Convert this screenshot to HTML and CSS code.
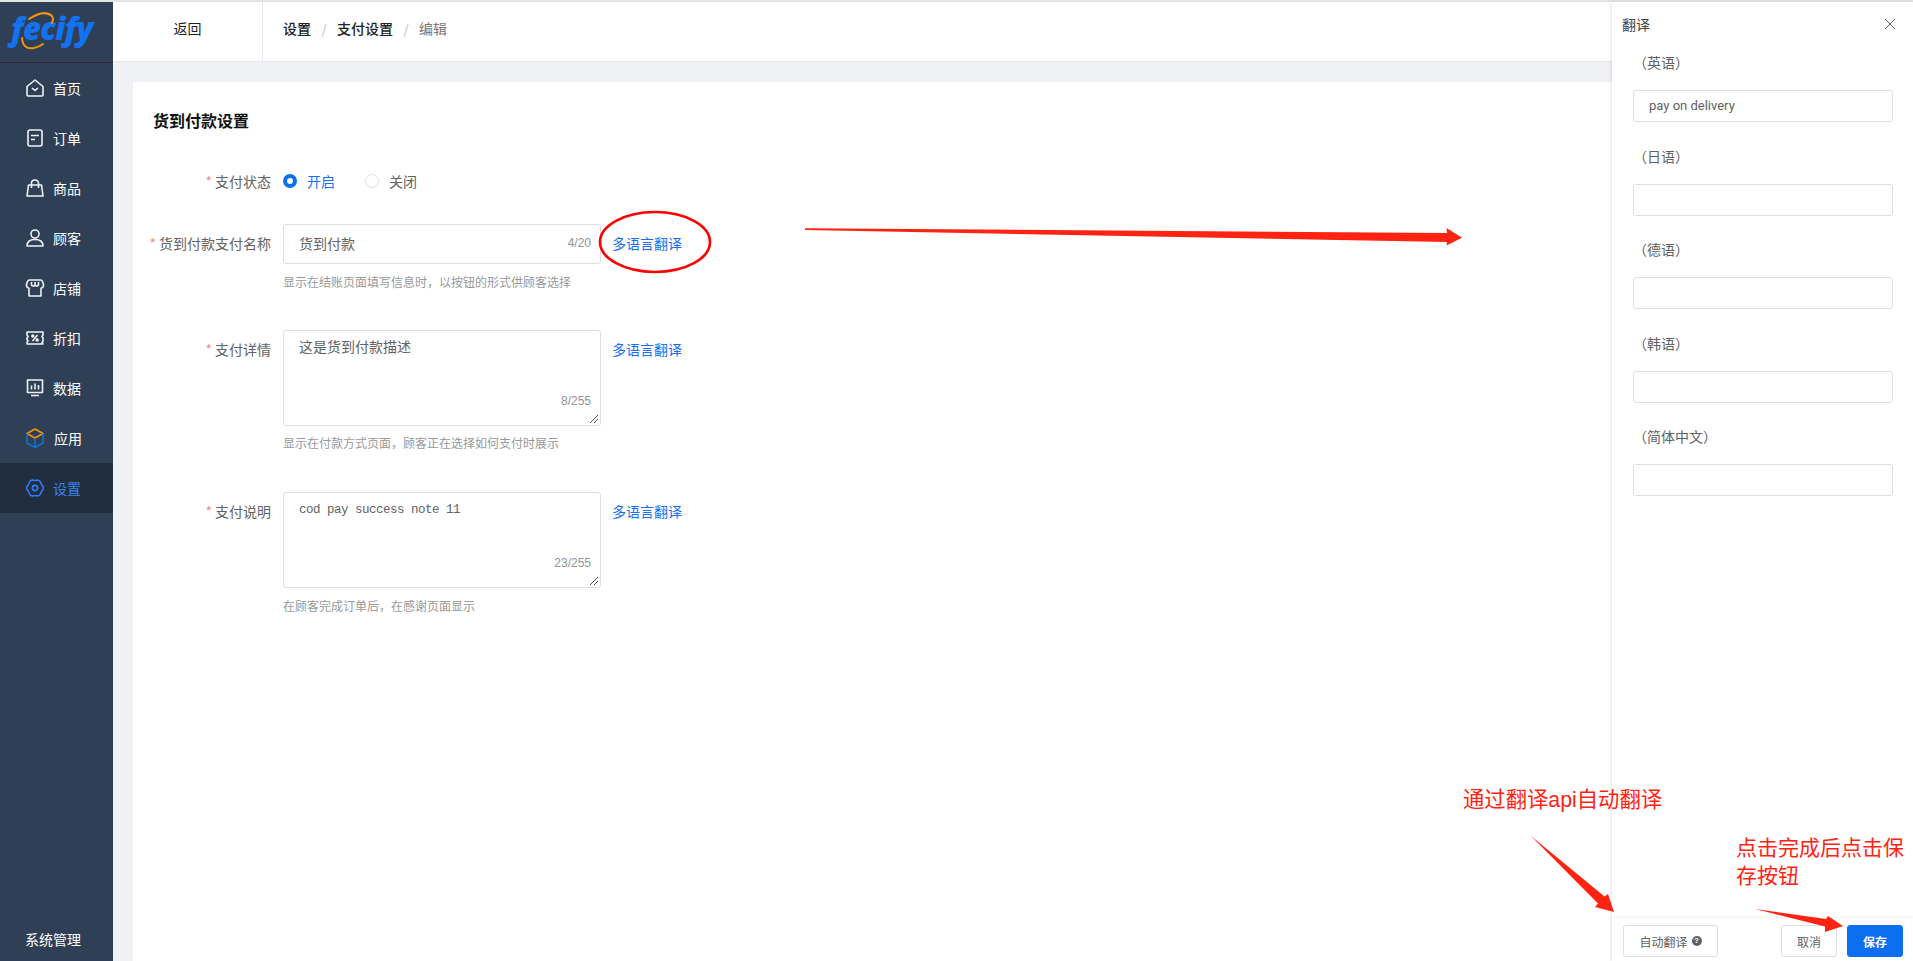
FILE: index.html
```html
<!DOCTYPE html>
<html lang="zh-CN">
<head>
<meta charset="utf-8">
<title>货到付款设置</title>
<link rel="stylesheet" href="styles.css">
</head>
<body>
<div class="app">
  <aside class="sidebar">
    <div class="logo">
      <span class="logo-text">fecify</span>
      <svg class="logo-arcs" width="113" height="60" viewBox="0 0 113 60" fill="none" stroke="#f0930f" stroke-width="2" stroke-linecap="round"><path d="M29 19Q44 9 52 16 54 19 52 23"/><path d="M22 38Q23 50 34 48 39 47 43 44"/></svg>
    </div>
    <nav class="menu">
      <a class="menu-item"><svg class="mi" viewBox="0 0 18 18"><path d="M1 7.500 9 1l8 6.500V16a1 1 0 0 1-1 1H2a1 1 0 0 1-1-1z"/><path d="M6 9l3 2.500L12 9"/></svg><span>首页</span></a>
      <a class="menu-item"><svg class="mi" viewBox="0 0 18 18"><rect x="2" y="1" width="14" height="16" rx="2"/><path d="M5 6.500h8M5 10.500h4"/></svg><span>订单</span></a>
      <a class="menu-item"><svg class="mi" viewBox="0 0 18 18"><path d="M1 17 2.500 6h13L17 17z"/><path d="M5.500 9V4a3.500 3 0 0 1 7 0v5"/></svg><span>商品</span></a>
      <a class="menu-item"><svg class="mi" viewBox="0 0 18 18"><circle cx="9" cy="5" r="4"/><path d="M1 17c0-4 3-6.500 8-6.500s8 2.500 8 6.500z"/></svg><span>顾客</span></a>
      <a class="menu-item"><svg class="mi" viewBox="0 0 18 18"><path d="M3.500 1h11q1.500 0 2 1.500l1 3q.5 3-2.500 3.800V17H3V9.300Q0 8.500.5 5.500l1-3Q2 1 3.500 1z"/><path d="M5.500 3v2.500a1.750 1.500 0 0 0 3.500 0V3M9 5.500a1.750 1.500 0 0 0 3.500 0V3"/></svg><span>店铺</span></a>
      <a class="menu-item"><svg class="mi" viewBox="0 0 18 18"><path d="M1 3h16v3l-1 1.500 1 1.500v3l-1 1.500 1 1.500H1v-1.500l1-1.500-1-1.500V9l1-1.500L1 6z"/><path d="M6.500 12l5-6"/><circle cx="6.800" cy="7" r=".9"/><circle cx="11.200" cy="11" r=".9"/></svg><span>折扣</span></a>
      <a class="menu-item"><svg class="mi" viewBox="0 0 18 18"><rect x="1.500" y="1" width="15" height="12.500"/><path d="M5.500 6.500v4M9 4.500v6M12.500 6v4.500M5 16.500h8"/></svg><span>数据</span></a>
      <a class="menu-item"><svg class="mi cube" viewBox="0 0 18 20"><path class="cube-top" d="M9 1l8 4.500-8 4.500-8-4.500z"/><path class="cube-side" d="M1 5.500v9.500l8 4.500 8-4.500V5.500M9 10.500v9"/></svg><span class="shift">应用</span></a>
      <a class="menu-item active"><svg class="mi" viewBox="0 0 18 18"><path d="M9 1.600Q14.300 -.2 15.300 5.300 19.600 9 15.300 12.700 14.300 18.200 9 16.400 3.700 18.200 2.700 12.700-1.600 9 2.700 5.300 3.700 -.2 9 1.600z"/><circle cx="9" cy="9" r="2.600"/></svg><span>设置</span></a>
    </nav>
    <div class="sys">系统管理</div>
  </aside>

  <div class="main">
    <header class="topbar">
      <div class="back">返回</div>
      <div class="crumbs">
        <span class="crumb">设置</span><span class="sep">/</span>
        <span class="crumb">支付设置</span><span class="sep">/</span>
        <span class="crumb last">编辑</span>
      </div>
    </header>
    <div class="content">
      <section class="card">
        <h1 class="title">货到付款设置</h1>
        <div class="row row-radio">
          <div class="label short"><i>*</i>支付状态</div>
          <div class="radios">
            <span class="radio"><b class="dot on"></b><span class="radio-on">开启</span></span>
            <span class="radio"><b class="dot"></b><span>关闭</span></span>
          </div>
        </div>
        <div class="row row-name">
          <div class="label"><i>*</i>货到付款支付名称</div>
          <div class="control">
            <div class="input">货到付款<span class="count">4/20</span></div>
            <p class="hint">显示在结账页面填写信息时，以按钮的形式供顾客选择</p>
          </div>
          <a class="link">多语言翻译</a>
        </div>
        <div class="row row-detail">
          <div class="label"><i>*</i>支付详情</div>
          <div class="control">
            <div class="area">这是货到付款描述<span class="count">8/255</span>
              <svg class="grip" width="10" height="10" viewBox="0 0 10 10"><path d="M1 9 9 1M5 9 9 5" stroke="#555" fill="none"/></svg></div>
            <p class="hint">显示在付款方式页面，顾客正在选择如何支付时展示</p>
          </div>
          <a class="link">多语言翻译</a>
        </div>
        <div class="row row-note">
          <div class="label"><i>*</i>支付说明</div>
          <div class="control">
            <div class="area mono">cod pay success note 11<span class="count">23/255</span>
              <svg class="grip" width="10" height="10" viewBox="0 0 10 10"><path d="M1 9 9 1M5 9 9 5" stroke="#555" fill="none"/></svg></div>
            <p class="hint">在顾客完成订单后，在感谢页面显示</p>
          </div>
          <a class="link">多语言翻译</a>
        </div>
      </section>
    </div>
  </div>

  <aside class="drawer">
    <div class="drawer-head"><span>翻译</span>
      <svg class="close" width="12" height="12" viewBox="0 0 12 12"><path d="M1 1l10 10M11 1 1 11" stroke="#666" fill="none"/></svg></div>
    <div class="drawer-body">
      <label class="d-label">（英语）</label><div class="d-input">pay on delivery</div>
      <label class="d-label">（日语）</label><div class="d-input"></div>
      <label class="d-label">（德语）</label><div class="d-input"></div>
      <label class="d-label">（韩语）</label><div class="d-input"></div>
      <label class="d-label">（简体中文）</label><div class="d-input"></div>
    </div>
    <div class="drawer-foot">
      <button class="btn btn-auto">自动翻译<span class="q">?</span></button>
      <span class="spacer"></span>
      <button class="btn btn-cancel">取消</button>
      <button class="btn btn-save">保存</button>
    </div>
  </aside>
</div>

<svg class="marks" width="1913" height="961" viewBox="0 0 1913 961">
  <ellipse cx="655" cy="242" rx="55" ry="30" fill="none" stroke="#f00" stroke-width="2.600"/>
  <g fill="#ff2312">
    <path d="M805 228.300 1447 233 1446.500 228 1462 237.700 1446.500 245.500 1447 242 805 230z"/>
    <path d="M1531 836 1604.500 896.500 1608 894 1614 912 1595 907 1598 903.500z"/>
    <path d="M1755 909 1826 919 1828 916 1843 926 1825 932 1825 926.500z"/>
  </g>
</svg>
<div class="note note-a">通过翻译api自动翻译</div>
<div class="note note-b">点击完成后点击保存按钮</div>
</body>
</html>
```
FILE: styles.css
```css
* { box-sizing: border-box; }
html, body { margin: 0; height: 100%; overflow: hidden; }
body {
  font-family: "Noto Sans CJK SC", "Liberation Sans", sans-serif;
  font-size: 14px;
  color: #606266;
  background: #fff;
}
.app {
  position: relative;
  display: flex;
  height: 961px;
  border-top: 2px solid #e2e2e2;
}

/* sidebar */
.sidebar {
  width: 113px;
  flex: none;
  display: flex;
  flex-direction: column;
  background: #2f4056;
  color: #fff;
}
.logo {
  position: relative;
  height: 61px;
  flex: none;
  border-bottom: 1px solid #2b2b2b;
  padding-left: 11px;
}
.logo-text {
  font-family: "Open Sans", "Liberation Sans", sans-serif;
  font-weight: 800;
  font-style: italic;
  font-size: 31px;
  line-height: 52px;
  color: #1272f0;
  letter-spacing: -.7px;
}
.logo-arcs { position: absolute; left: 0; top: -2px; }
.menu { display: flex; flex-direction: column; }
.menu-item {
  display: flex;
  align-items: center;
  height: 50px;
  padding-left: 26px;
  gap: 9px;
  line-height: 20px;
}
.mi {
  width: 18px;
  height: 18px;
  flex: none;
  fill: none;
  stroke: #eef2f6;
  stroke-width: 1.6;
  stroke-linejoin: round;
  overflow: visible;
}
.cube { height: 20px; }
.cube-top { stroke: #f0930f; }
.cube-side { stroke: #1273c9; }
.shift { margin-left: 1px; }
.menu-item.active { background: #212e3f; color: #3b82f6; }
.active .mi { stroke: #3478f6; }
.sys { margin-top: auto; padding: 0 0 12px 25px; line-height: 20px; }

/* main */
.main { flex: 1; min-width: 0; display: flex; flex-direction: column; }
.topbar {
  height: 60px;
  flex: none;
  display: flex;
  align-items: stretch;
  background: #fff;
  border-bottom: 1px solid #e6e8ec;
}
.back {
  width: 150px;
  border-right: 1px solid #e6e8ec;
  display: flex;
  align-items: center;
  justify-content: center;
  padding-bottom: 7px;
  color: #222;
}
.crumbs { display: flex; align-items: center; padding: 0 0 7px 20px; }
.crumb { color: #222; font-weight: 500; }
.crumb.last { color: #777; font-weight: 400; }
.sep { color: #bbb; width: 26px; text-align: center; font-size: 13px; }
.content { flex: 1; min-height: 0; padding: 20px 0 0 20px; background: #f0f1f5; }
.card { height: 100%; background: #fff; padding: 24px 0 0 20px; }
.title {
  margin: 0;
  font-size: 16px;
  font-weight: 700;
  line-height: 28px;
  color: #111;
}

/* form */
.row { display: flex; align-items: flex-start; }
.row-radio { margin-top: 35px; }
.row-name { margin-top: 31px; }
.row-detail { margin-top: 39px; }
.row-note { margin-top: 40px; }
.label {
  width: 124px;
  flex: none;
  margin: 0 12px 0 -6px;
  text-align: right;
  white-space: nowrap;
  line-height: 38px;
  color: #606266;
}
.label.short { line-height: 24px; }
.label i { color: #f78989; font-style: normal; margin-right: 3px; }
.radios { display: flex; line-height: 24px; }
.radio { display: inline-flex; align-items: center; width: 82px; gap: 10px; }
.radio-on { color: #1a6ef5; }
.dot {
  width: 14px;
  height: 14px;
  border-radius: 50%;
  border: 1px solid #dcdfe6;
  flex: none;
}
.dot.on { border: 4.500px solid #0c6ef0; background: #fff; }
.control { width: 318px; flex: none; }
.input, .area {
  position: relative;
  border: 1px solid #dcdfe6;
  border-radius: 3px;
  padding: 0 15px;
  color: #606266;
}
.input { height: 40px; line-height: 36px; }
.area { height: 96px; line-height: 22px; padding-top: 4px; }
.mono {
  font-family: "Liberation Mono", "DejaVu Sans Mono", monospace;
  font-size: 12.500px;
  letter-spacing: -.5px;
  padding-top: 6px;
}
.count {
  position: absolute;
  right: 9px;
  top: 0;
  font-family: "Liberation Sans", sans-serif;
  font-size: 12px;
  letter-spacing: 0;
  color: #909399;
}
.area .count { top: auto; bottom: 16px; line-height: 16px; }
.grip { position: absolute; right: 1px; bottom: 1px; }
.hint { margin: 9px 0 0; font-size: 12px; line-height: 18px; color: #999; }
.row-detail .hint { margin-top: 8px; }
.link { margin-left: 11px; color: #1a6ef5; line-height: 38px; }

/* drawer */
.drawer {
  position: absolute;
  top: 0;
  right: 0;
  bottom: 0;
  width: 301px;
  display: flex;
  flex-direction: column;
  background: #fff;
  box-shadow: -1px 0 3px rgba(0, 0, 0, .1);
}
.drawer-head {
  height: 49px;
  flex: none;
  display: flex;
  justify-content: space-between;
  padding: 11px 17px 0 10px;
  line-height: 22px;
  color: #444;
}
.close { margin-top: 5px; }
.drawer-body { flex: 1; padding-left: 21px; }
.d-label { display: block; line-height: 22px; margin-bottom: 17px; color: #606266; }
.d-input {
  width: 260px;
  height: 32px;
  margin-bottom: 22.500px;
  border: 1px solid #dcdfe6;
  border-radius: 3px;
  padding: 0 15px;
  line-height: 30px;
  font-family: "Roboto", "Liberation Sans", sans-serif;
  font-size: 13px;
  color: #606266;
}
.drawer-foot {
  height: 43px;
  flex: none;
  display: flex;
  align-items: flex-start;
  padding: 7px 10px 0 11px;
  gap: 10px;
  box-shadow: 0 -1px 3px rgba(0, 0, 0, .06);
}
.spacer { flex: 1; }
.btn {
  height: 32px;
  border: 1px solid #dcdfe6;
  border-radius: 3px;
  background: #fff;
  color: #606266;
  font: inherit;
  font-size: 12px;
  padding: 0;
}
.btn-auto { width: 95px; display: flex; align-items: center; justify-content: center; gap: 4px; }
.q {
  width: 10px;
  height: 10px;
  border-radius: 50%;
  background: #606266;
  color: #fff;
  font-size: 8px;
  font-weight: 700;
  line-height: 10px;
  text-align: center;
  font-family: "Liberation Sans", sans-serif;
}
.btn-cancel { width: 56px; }
.btn-save {
  width: 56px;
  background: #0c6ef0;
  border-color: #0c6ef0;
  color: #fff;
  font-weight: 700;
}

/* annotations over the screenshot */
.marks { position: absolute; left: 0; top: 0; pointer-events: none; }
.note {
  position: absolute;
  color: #ff2312;
  font-family: "Liberation Sans", "Noto Sans CJK SC", sans-serif;
  font-size: 21.330px;
  line-height: 28px;
}
.note-a { left: 1463px; top: 786px; white-space: nowrap; }
.note-b { left: 1736px; top: 834px; width: 172px; font-size: 21px; }
```
